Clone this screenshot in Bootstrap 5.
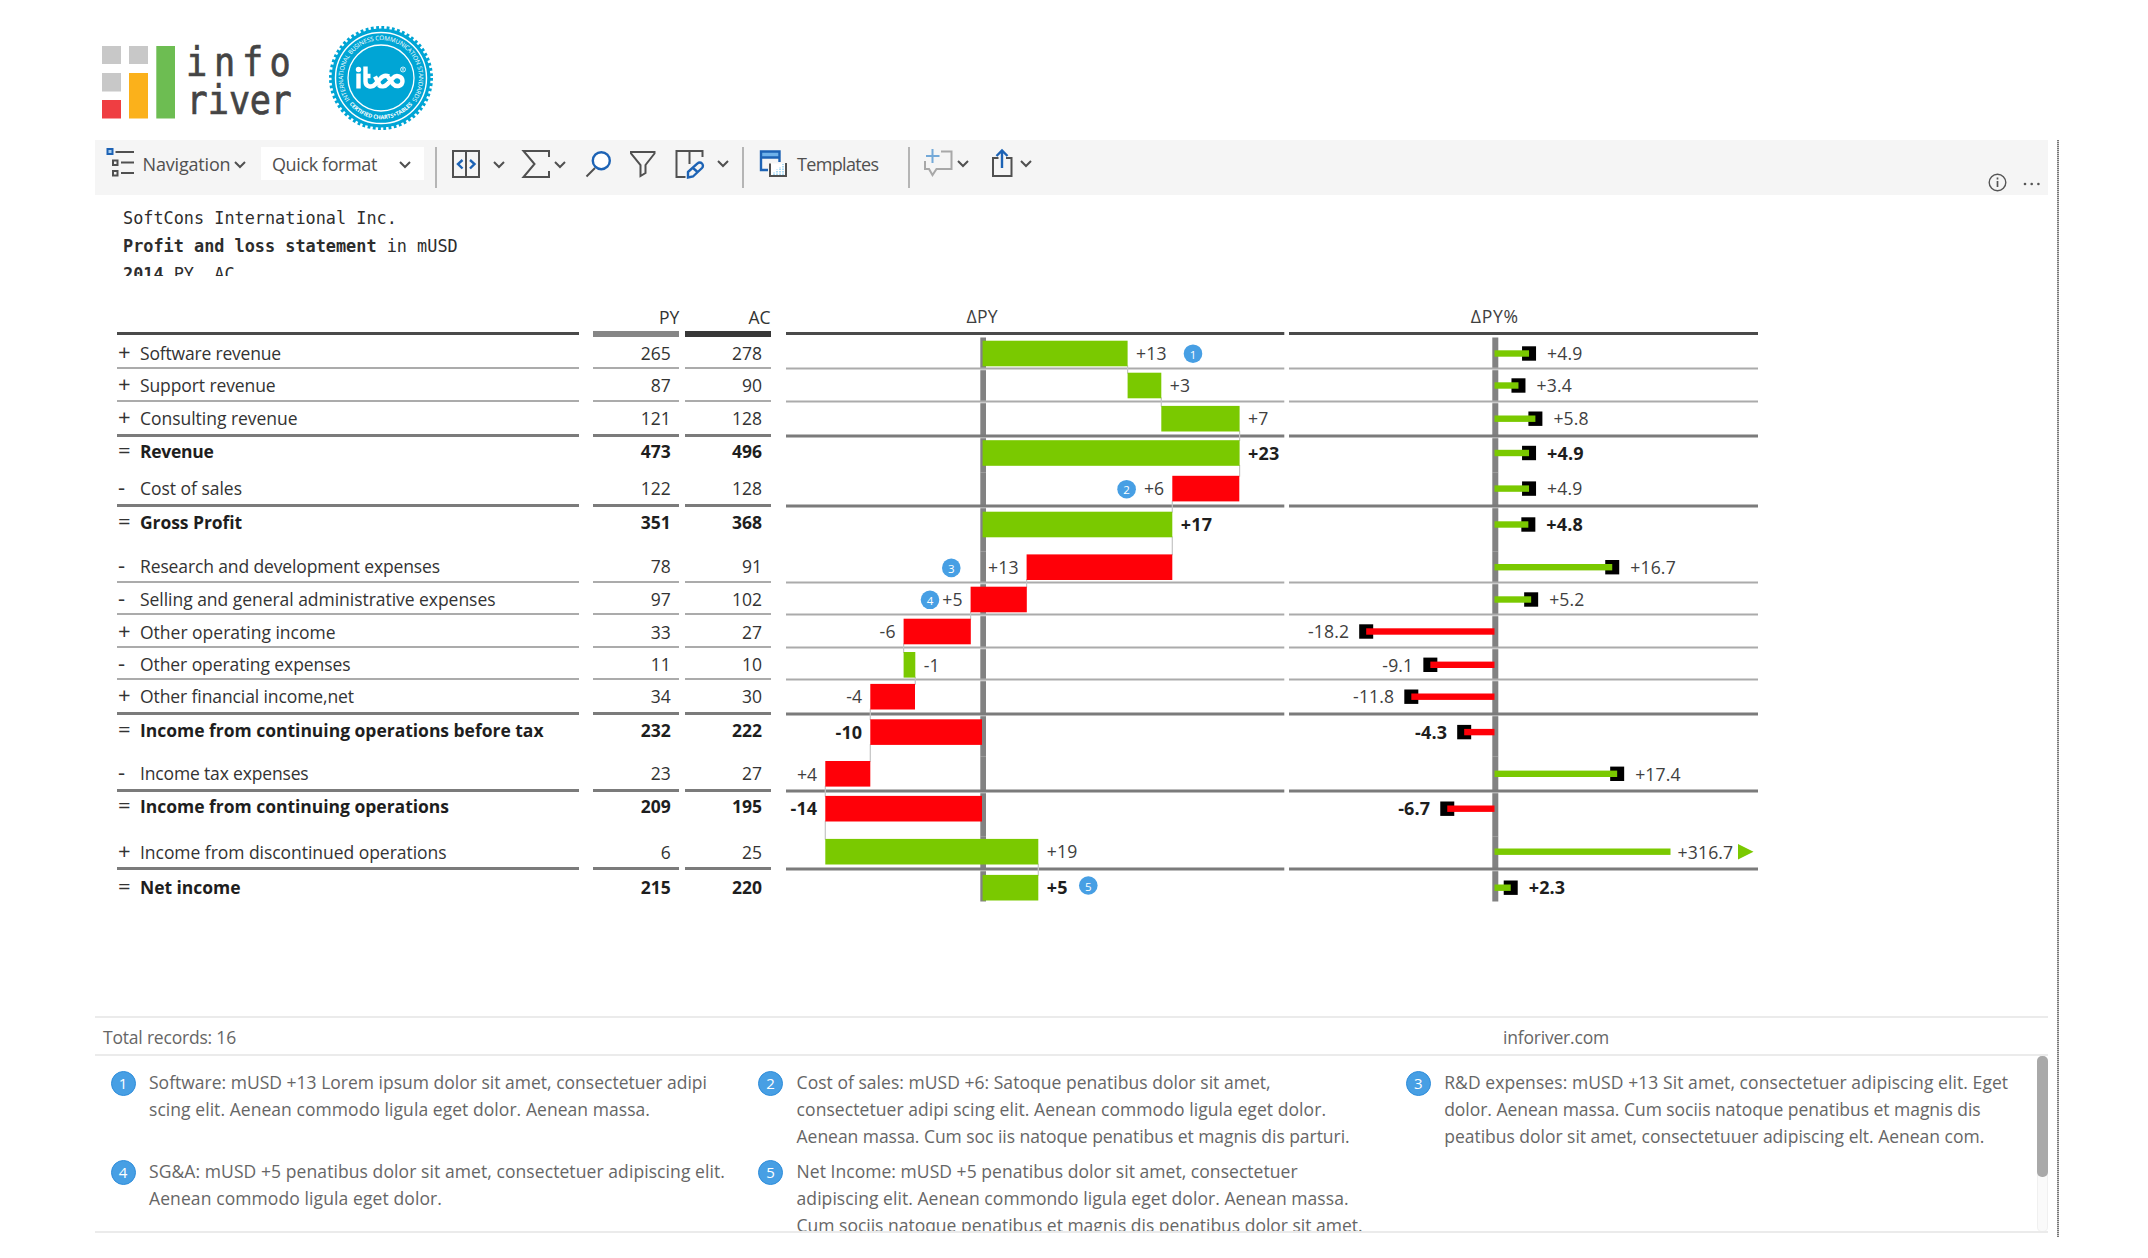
<!DOCTYPE html>
<html lang="en">
<head>
<meta charset="utf-8">
<meta name="viewport" content="width=device-width, initial-scale=1">
<title>Profit and loss statement</title>
<link href="https://cdn.jsdelivr.net/npm/bootstrap@5.3.0/dist/css/bootstrap.min.css" rel="stylesheet">
<style>
body{font-family:"Open Sans","Noto Sans",sans-serif;font-size:17.5px;color:#333;background:#fff;width:2148px;height:1258px;overflow:hidden}
svg{display:block;flex:none;overflow:visible}
.brandbar{height:140px;padding:26px 0 0 7px}
.logo-mark{margin-top:20px}
.logo-seal{margin-left:38px}
.report{width:1964px;margin-left:95px;height:1237px}
.report-body{width:1953px}
.edge{width:2px;margin:140px 0 0 9px;background:repeating-linear-gradient(#777 0 1px,#ccc 1px 2px)}
.tools{height:55px;background:#f5f5f5;color:#505050;padding-top:7px}
.tools .txt{line-height:34px;white-space:nowrap;font-size:18px}
.tools .sep{width:2px;height:41px;background:#b5b5b5}
.quick{width:163px;height:33px;background:#fff;padding:0 13px 0 11.5px}
.quick .txt{line-height:34px}
.st{fill:none;stroke:#505050;stroke-width:2}
.bl{fill:none;stroke:#1d63b5;stroke-width:2.4}
.heading{font-family:"DejaVu Sans Mono","Liberation Mono",monospace;font-size:16.85px;line-height:28.2px;height:80.5px;overflow:hidden;padding:8.5px 0 0 28px;color:#2d2d2d;white-space:pre}
.sheet{margin-top:25px;padding-left:22px;height:715px}
.col-label{width:461.6px;margin-right:14.7px}
.col-num{width:86px;text-align:right}
.col-py{margin-right:5.3px}
.col-ac{margin-right:15px}
.hd{height:34px;line-height:32px;font-size:17.5px}
.hd.lab{border-bottom:3px solid #4a4a4a}
.col-num .hd{height:36px;margin-bottom:-2px}
.line-row{line-height:24px;white-space:nowrap;overflow:hidden}
.l1{border-bottom:2px solid #ababab}
.l2{border-bottom:3px solid #7b7b7b}
.sum{font-weight:700;color:#1e1e1e}
.sign{width:23px;padding-left:1px;font-weight:400;font-size:22px;line-height:21px;color:#333}
.status{height:40px;border-top:2px solid #ebebeb;border-bottom:2px solid #ebebeb;color:#666;line-height:39px;padding-left:8px}
.notes{height:177px;border-bottom:2px solid #ebebeb;overflow:hidden;color:#666;line-height:27.2px}
.notes-col{width:647.6px}
.note-item{height:89px;padding:13.3px 0 0 15.5px;white-space:nowrap}
.note-no{width:25px;height:25px;margin:2px 13.5px 0 0;border-radius:50%;background:#479fe4;border:1px solid #2f8ddb;color:#fff;font-size:15px;line-height:23px;text-align:center}
.track{width:11px;height:176px;border-radius:5px;background:#fafafa;box-shadow:inset 0 0 0 1px #f0f0f0;margin-left:auto}
.thumb{height:121px;border-radius:5px;background:#a9a9a9}
svg text{font-family:"Open Sans","Noto Sans",sans-serif}
</style>
<script src="https://cdn.jsdelivr.net/npm/bootstrap@5.3.0/dist/js/bootstrap.bundle.min.js"></script>
</head>
<body>
<div class="report d-flex">
<div class="report-body flex-shrink-0">

<header class="brandbar d-flex align-items-start">
  <svg class="logo-mark" width="189" height="73" viewBox="102 46 189 73">
    <g fill="#c8c8c8"><rect x="102" y="46" width="19" height="18"/><rect x="129" y="46" width="19" height="18"/><rect x="102" y="73" width="19" height="18.500"/></g>
    <rect x="102" y="100" width="19" height="18.500" fill="#ef3e42"/><rect x="129" y="73" width="19" height="45.500" fill="#fbb11b"/><rect x="156.300" y="46" width="18.700" height="72.500" fill="#6dbd52"/>
    <g fill="#444" stroke="#444" stroke-width=".7" style="font-size:41px">
      <text transform="translate(186 76) scale(.86 1)" x="0 32.500 65 97" y="0" style="font-family:'DejaVu Sans Mono',monospace">info</text>
      <text transform="translate(186.500 114) scale(.86 1)" x="0 24.700 49.400 73.500 97.800" y="0" style="font-family:'DejaVu Sans Mono',monospace">river</text>
    </g>
  </svg>
  <svg class="logo-seal" width="104" height="104" viewBox="-52 -52 104 104">
    <circle r="49.500" fill="#00a5d5"/>
    <circle r="50" fill="none" stroke="#00a5d5" stroke-width="4" stroke-dasharray="2.800 2.436"/>
    <circle r="45.500" fill="none" stroke="#fff" stroke-width="1.400"/>
    <circle r="33" fill="none" stroke="#fff" stroke-width="1.300"/>
    <path id="arcTop" d="M-30.500 22.500A37.900 37.900 0 1 1 30.500 22.500" fill="none"/>
    <path id="arcBottom" d="M-33 24.500A41.100 41.100 0 0 0 33 24.500" fill="none"/>
    <g fill="#fff">
    <text font-size="6.200"><textPath href="#arcTop" textLength="165" startOffset="1">INTERNATIONAL BUSINESS COMMUNICATION STANDARDS</textPath></text>
    <text font-size="5.600" font-weight="700"><textPath href="#arcBottom" textLength="72" startOffset="2">CERTIFIED CHARTS+TABLES</textPath></text>
    <circle cx="-22.500" cy="-8.500" r="2.700"/>
    </g>
    <g fill="none" stroke="#fff" stroke-width="4.400" stroke-linecap="butt" stroke-linejoin="round">
      <path d="M-22.500-4.500V10.500M-15.500-11.500V3.500C-15.500 9-9 10-6 6.500L-.5.500C2-2.500 5-3 8-1.500M-15.500-2H-10.500M-2.500 7C0 9 4 9 6.500 6L12 0C15-3.500 21.500-2 21.500 3S15.500 9.800 12 6L7-1"/>
      <path d="M-6-1.500L-1.500 7"/>
    </g>
    <circle cx="22" cy="-8.500" r="2.500" fill="none" stroke="#fff" stroke-width=".8"/><text x="20.600" y="-7" font-size="4" fill="#fff">R</text>
  </svg>
</header>

<nav class="tools d-flex align-items-start">
  <svg width="28" height="30" viewBox="106 149 28 30" style="margin-left:11px"><rect x="107.500" y="151" width="5" height="5" fill="#a9cff0" stroke="#1d63b5" stroke-width="2"/><path class="st" d="M115.500 154H134M121 164.500h13M121 175h13M113 162.500h4.500v4.500H113zM113 173h4.500v4.500H113z"/></svg>
  <span class="txt" data-w="88" style="margin-left:8.500px">Navigation</span>
  <svg width="12" height="8" viewBox="0 0 12 8" style="margin:14px 0 0 3.500px"><path class="st" d="M1 1l5 5 5-5"/></svg>
  <div class="quick d-flex align-items-start justify-content-between" style="margin-left:14.500px"><span class="txt" data-w="105">Quick format</span><svg width="12" height="8" viewBox="0 0 12 8" style="margin-top:14px"><path class="st" d="M1 1l5 5 5-5"/></svg></div>
  <span class="sep" style="margin-left:11px"></span>
  <svg width="28" height="28" viewBox="0 0 28 28" style="margin:3px 0 0 15px"><path class="st" d="M1 1h26v26H1zM14 1v26"/><path class="bl" stroke-width="2" d="M10.500 10l-4.500 4 4.500 4.500M18 10l4.500 4-4.500 4.500"/></svg>
  <svg width="12" height="8" viewBox="0 0 12 8" style="margin:14px 0 0 13px"><path class="st" d="M1 1l5 5 5-5"/></svg>
  <svg width="28" height="28" viewBox="0 0 28 28" style="margin:3px 0 0 17px"><path class="st" d="M27 7V1H1.500L12.500 14 1.500 27H27v-6"/></svg>
  <svg width="12" height="8" viewBox="0 0 12 8" style="margin:14px 0 0 4.500px"><path class="st" d="M1 1l5 5 5-5"/></svg>
  <svg width="25" height="28" viewBox="587 150 25 28" style="margin:3px 0 0 19.500px"><path class="st" d="M587.500 176.500L596 168"/><circle cx="602.300" cy="160.700" r="8.500" class="bl" style="fill:#fff"/></svg>
  <svg width="26" height="28" viewBox="631 150 26 28" style="margin:3px 0 0 19px"><path class="st" d="M632 152h23.500v1.500L646.500 165v8l-5 3V165L632 153.500z"/></svg>
  <svg width="28" height="28" viewBox="676 150 28 28" style="margin:3px 0 0 19px"><path class="st" d="M703.500 157v-6H677.500v26h9M690.500 151v13"/><path class="bl" d="M689 172l9.500-8.500a3 3 0 0 1 4.500 4.500l-9 8.500-5 1zM694 168l4 3.500"/></svg>
  <svg width="12" height="8" viewBox="0 0 12 8" style="margin:13px 0 0 14.500px"><path class="st" d="M1 1l5 5 5-5"/></svg>
  <span class="sep" style="margin-left:13px"></span>
  <svg width="27" height="28" viewBox="761 149 27 28" style="margin:2.500px 0 0 16px"><path d="M762 151h19v5h-19z" fill="#6fb2ea"/><path class="bl" d="M769 169h-7V150.500h18.500V161M762 156.500h18.500"/><path d="M771.500 162.500h15v12h-15z" fill="#fff"/><path d="M771 162.500V175h16V162" class="st"/><path d="M775 174v-3M778 174v-5.500M781 174v-8M784 174v-11" stroke="#8fd0f2" stroke-width="1.500" stroke-dasharray="1.500 1"/></svg>
  <span class="txt" data-w="81.500" style="margin-left:10px">Templates</span>
  <span class="sep" style="margin-left:29px"></span>
  <svg width="28" height="28" viewBox="924 148 28 28" style="margin:1px 0 0 14px"><path d="M941 151.500h10.500V169H936.500l-4 6-3.500-6h-4v-8" fill="none" stroke="#a8a8a8" stroke-width="2"/><path d="M932.500 149v14M926 156h13.500" stroke="#74a9d8" stroke-width="2"/></svg>
  <svg width="12" height="8" viewBox="0 0 12 8" style="margin:12.500px 0 0 5px"><path class="st" d="M1 1l5 5 5-5"/></svg>
  <svg width="20" height="29" viewBox="992 148 20 29" style="margin:1px 0 0 23px"><path class="st" d="M998.500 158H993v18h18.500v-18H1006"/><path class="bl" stroke-width="2" d="M1002 168V150.500M996.500 156l5.500-5.500 5.500 5.500"/></svg>
  <svg width="12" height="8" viewBox="0 0 12 8" style="margin:12.500px 0 0 8px"><path class="st" d="M1 1l5 5 5-5"/></svg>
  <svg class="ms-auto" width="60" height="20" viewBox="1988 173 60 20" style="margin-top:26px"><circle cx="1997.500" cy="182.500" r="8.300" fill="none" stroke="#555" stroke-width="1.400"/><path d="M1997.500 181v6M1997.500 177.500v2" stroke="#555" stroke-width="1.700"/><g fill="#555"><circle cx="2025" cy="184" r="1.300"/><circle cx="2031.700" cy="184" r="1.300"/><circle cx="2038.400" cy="184" r="1.300"/></g></svg>
</nav>

<div class="heading">SoftCons International Inc.
<b>Profit and loss statement</b> in mUSD
<b>2014</b> PY, AC</div>

<main class="sheet d-flex align-items-start">
  <div class="col-label" id="labels"><div class="hd lab"></div></div>
  <div class="col-num col-py" id="py"><div class="hd" style="border-bottom:6px solid #868686">PY</div></div>
  <div class="col-num col-ac" id="ac"><div class="hd" style="border-bottom:6px solid #383838">AC</div></div>
  <svg id="delta" width="498.500" height="602" viewBox="785.700 300.500 498.500 602" style="margin-right:4.800px"></svg>
  <svg id="pct" width="469" height="602" viewBox="1289 300.500 469 602"></svg>
</main>

<div class="status d-flex"><span data-w="133">Total records: 16</span><span data-w="106" style="margin-left:1267px">inforiver.com</span></div>

<section class="notes d-flex">
  <div class="notes-col flex-shrink-0">
    <div class="note-item d-flex"><div class="note-no">1</div><div><span data-w="558">Software: mUSD +13 Lorem ipsum dolor sit amet, consectetuer adipi</span><br><span data-w="501">scing elit. Aenean commodo ligula eget dolor. Aenean massa.</span></div></div>
    <div class="note-item d-flex"><div class="note-no">4</div><div><span data-w="576">SG&amp;A: mUSD +5 penatibus dolor sit amet, consectetuer adipiscing elit.</span><br><span data-w="293">Aenean commodo ligula eget dolor.</span></div></div>
  </div>
  <div class="notes-col flex-shrink-0">
    <div class="note-item d-flex"><div class="note-no">2</div><div><span data-w="474">Cost of sales: mUSD +6: Satoque penatibus dolor sit amet,</span><br><span data-w="529.500">consectetuer adipi scing elit. Aenean commodo ligula eget dolor.</span><br><span data-w="553">Aenean massa. Cum soc iis natoque penatibus et magnis dis parturi.</span></div></div>
    <div class="note-item d-flex"><div class="note-no">5</div><div><span data-w="501">Net Income: mUSD +5 penatibus dolor sit amet, consectetuer</span><br><span data-w="552">adipiscing elit. Aenean commondo ligula eget dolor. Aenean massa.</span><br><span data-w="566">Cum sociis natoque penatibus et magnis dis penatibus dolor sit amet.</span></div></div>
  </div>
  <div class="notes-col" style="width:620px">
    <div class="note-item d-flex"><div class="note-no">3</div><div><span data-w="564">R&amp;D expenses: mUSD +13 Sit amet, consectetuer adipiscing elit. Eget</span><br><span data-w="536.500">dolor. Aenean massa. Cum sociis natoque penatibus et magnis dis</span><br><span data-w="540">peatibus dolor sit amet, consectetuuer adipiscing elt. Aenean com.</span></div></div>
  </div>
  <div class="track flex-shrink-0"><div class="thumb"></div></div>
</section>
</div>
<div class="edge flex-shrink-0"></div>
</div>

<script>
// sign, label, label width, PY, AC, row end, text baseline, line weight, bar centre, bar x0, bar x1, colour, delta text, side, percent
const G='#7ac900',R='#ff0008';
const rows=[
['+','Software revenue',141,265,278,369,360,1,353,982.3,1127.3,G,'+13',1,4.9],
['+','Support revenue',135.5,87,90,402,392,1,385,1127.3,1161,G,'+3',1,3.4],
['+','Consulting revenue',157.5,121,128,437,425,2,418.2,1161,1239.3,G,'+7',1,5.8],
['=','Revenue',73.5,473,496,472,457.3,0,452.5,982.3,1239.3,G,'+23',1,4.9],
['-','Cost of sales',102,122,128,507,495,2,488.1,1172,1239,R,'+6',-1,4.9],
['=','Gross Profit',102,351,368,551,529,0,524,982.3,1172,G,'+17',1,4.8],
['-','Research and development expenses',300,78,91,583,573,1,566.7,1026.3,1172,R,'+13',-1,16.7],
['-','Selling and general administrative expenses',355.5,97,102,615,606,1,599,970.3,1026.5,R,'+5',-1,5.2],
['+','Other operating income',195.5,33,27,648,638.5,1,631,903.3,970.5,R,'-6',-1,-18.2],
['-','Other operating expenses',210.5,11,10,680,670.5,1,664.3,903.3,915,G,'-1',1,-9.1],
['+','Other financial income,net',214,34,30,715,703,2,696.2,870,914.7,R,'-4',-1,-11.8],
['=','Income from continuing operations before tax',403.5,232,222,756,736.5,0,731.6,870,981.7,R,'-10',-1,-4.3],
['-','Income tax expenses',168.5,23,27,792,780,2,773.3,825,870,R,'+4',-1,17.4],
['=','Income from continuing operations',309,209,195,836,812.5,0,808.2,825,981.7,R,'-14',-1,-6.7],
['+','Income from discontinued operations',306.5,6,25,870,858.7,2,851.2,825,1038,G,'+19',1,316.7],
['=','Net income',100.5,215,220,901,893.5,0,887.2,982.3,1038,G,'+5',1,2.3]];
const rect=(x,y,w,h,f)=>`<rect x="${x}" y="${y}" width="${w}" height="${h}" fill="${f}"/>`;
const txt=(x,y,t,bold,end)=>`<text x="${x}" y="${y}" font-size="${bold?18:17.6}" letter-spacing=".15" fill="${bold?'#1e1e1e':'#404040'}" ${bold?'font-weight="700"':''} ${end?'text-anchor="end"':''}>${t}</text>`;
let top0=334.5,L='',P='',A='',axes=['',''],lines=['',''],marks=['',''];
rows.forEach((r,i)=>{
  const [sg,name,w,py,ac,end,base,lw,c,x0,x1,col,dt,side,pc]=r,b=sg==='=';
  const cls=`line-row ${lw?'l'+lw:''} ${b?'sum':''}`;
  const box=pad=>`style="height:${end-top0}px;padding-top:${Math.max(0,base-top0-18.8)}px;${pad}"`;
  L+=`<div class="${cls} d-flex" ${box('')}><span class="sign">${sg}</span><span data-w="${w}">${name}</span></div>`;
  P+=`<div class="${cls}" ${box('padding-right:8.5px')}>${py}</div>`;
  A+=`<div class="${cls}" ${box('padding-right:8.5px')}>${ac}</div>`;
  const t=!i?337:rows[i-1][7]?top0+.7:top0-.1;
  axes[0]+=rect(980,t,5.7,end-t-(lw?.3:0),'#828282');
  axes[1]+=rect(1492.3,t,6,end-t-(lw?.3:0),'#828282');
  if(lw){const h=lw+1,f=lw>1?'#7b7b7b':'#ababab';lines[0]+=rect(785.7,end-h,498.3,h,f);lines[1]+=rect(1289,end-h,469,h,f);}
  // connector down to the next bar
  if(i<rows.length-1){const n=rows[i+1];const xs=[x0,x1].find(v=>v!==982.3&&v!==981.7&&(Math.abs(v-n[9])<1||Math.abs(v-n[10])<1));
    if(xs)lines[0]+=rect(xs-.6,c+12,1.2,n[8]-c-24,'#c4c4c4');}
  marks[0]+=rect(x0,c-12.8,x1-x0,25.6,col)+txt(side>0?x1+8.5:x0-8,c+6.7,dt,b,side<0);
  const v=1494.5+pc*7.05,s=(pc>0?'+':'')+pc.toFixed(1);
  if(pc>300){marks[1]+=rect(1494.5,c-3.2,176,6.4,G)+txt(1677.5,c+6.8,s)+`<path d="M1738 843.500l15.500 7.800-15.500 7.700z" fill="${G}"/>`;}
  else{marks[1]+=rect(v-7,c-7.2,14,14.4,'#000')+rect(Math.min(v,1494.5),c-3.2,Math.abs(v-1494.5),6.4,pc>0?G:R)+txt(pc>0?v+18:v-17,c+6.7,s,b,pc<0);}
  top0=end;
});
document.getElementById('labels').insertAdjacentHTML('beforeend',L);
document.getElementById('py').insertAdjacentHTML('beforeend',P);
document.getElementById('ac').insertAdjacentHTML('beforeend',A);
const notes=[[1192.7,353.2,1],[1126.3,488.7,2],[951,567.4,3],[929.7,599.3,4],[1088,885,5]].map(([x,y,n])=>`<circle cx="${x}" cy="${y}" r="9.300" fill="#479fe4"/><text x="${x}" y="${y+5}" font-size="11.500" fill="#fff" text-anchor="middle">${n}</text>`).join('');
document.getElementById('delta').innerHTML=txt(966.300,322.7,'ΔPY')+rect(785.7,331.5,498.3,3,'#4a4a4a')+axes[0]+lines[0]+marks[0]+notes;
document.getElementById('pct').innerHTML=txt(1470.800,322.7,'ΔPY%').replace('<text','<text textLength="47.500"')+rect(1289,331.5,469,3,'#4a4a4a')+axes[1]+lines[1]+marks[1];
// even out the tracking so every line keeps its measure
document.querySelectorAll('[data-w]').forEach(e=>{
  const w=e.getBoundingClientRect().width,n=e.textContent.length;
  e.style.letterSpacing=((e.dataset.w-w)/n).toFixed(3)+'px';
});
</script>
</body>
</html>
